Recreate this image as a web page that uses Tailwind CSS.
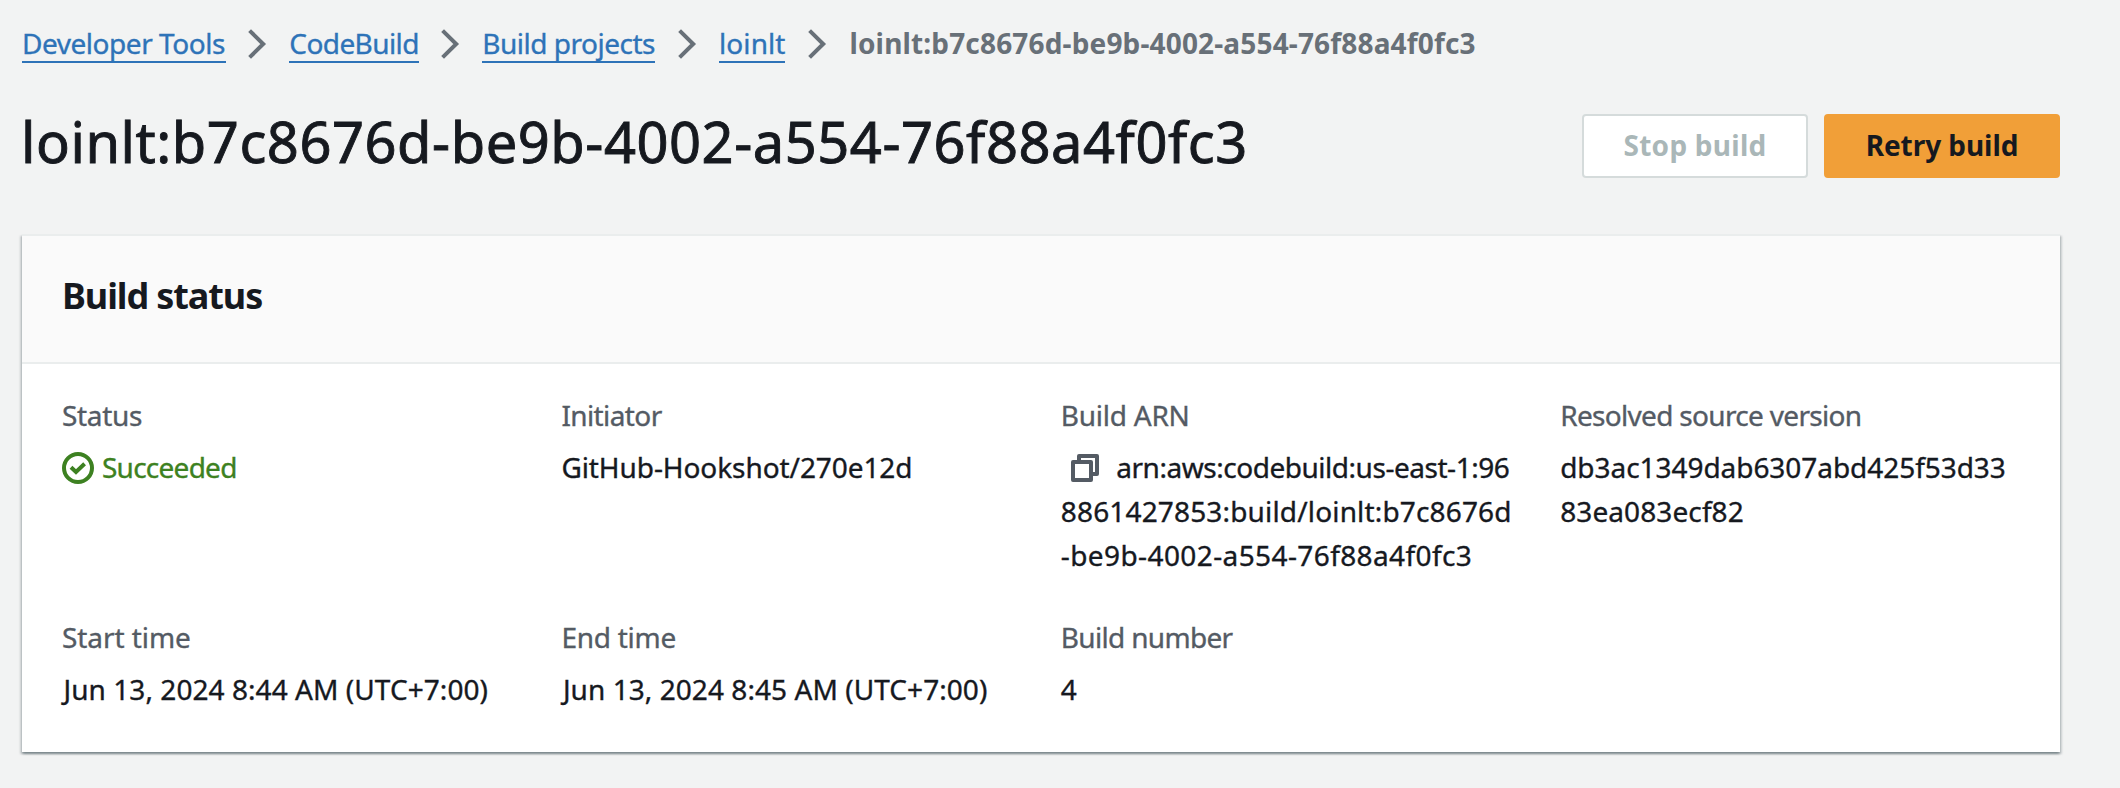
<!DOCTYPE html>
<html lang="en">
<head>
<meta charset="utf-8">
<title>Build status</title>
<script src="https://cdn.jsdelivr.net/npm/@tailwindcss/browser@4"></script>
</head>
<body class="min-h-screen overflow-hidden bg-[#f2f3f3] pl-[22px] pr-[60px] font-['Noto_Sans','Open_Sans',sans-serif] text-[28px] leading-[44px] text-[#16191f] whitespace-nowrap [-webkit-text-stroke:0.35px]">

<nav class="flex h-[63px] items-end leading-[40px] text-[#2e73b8]">
  <a class="h-10 w-[203.5px] border-b-2 border-[#2e73b8] tracking-[-0.46px]">Developer Tools</a>
  <svg class="mx-[22.4px] mb-1 h-[30px] w-[19px] shrink-0" viewBox="0 0 19 30" fill="none" stroke="#687078" stroke-width="4"><path d="M1.6 1.6 15.2 15 1.6 28.4"/></svg>
  <a class="h-10 w-[129.5px] border-b-2 border-[#2e73b8] tracking-[-0.58px]">CodeBuild</a>
  <svg class="mx-[22.2px] mb-1 h-[30px] w-[19px] shrink-0" viewBox="0 0 19 30" fill="none" stroke="#687078" stroke-width="4"><path d="M1.6 1.6 15.2 15 1.6 28.4"/></svg>
  <a class="h-10 w-[173px] border-b-2 border-[#2e73b8] tracking-[-0.48px]">Build projects</a>
  <svg class="mx-[22.4px] mb-1 h-[30px] w-[19px] shrink-0" viewBox="0 0 19 30" fill="none" stroke="#687078" stroke-width="4"><path d="M1.6 1.6 15.2 15 1.6 28.4"/></svg>
  <a class="h-10 w-[66.5px] border-b-2 border-[#2e73b8] tracking-[0.1px]">loinlt</a>
  <svg class="mx-[22.5px] mb-1 h-[30px] w-[19px] shrink-0" viewBox="0 0 19 30" fill="none" stroke="#687078" stroke-width="4"><path d="M1.6 1.6 15.2 15 1.6 28.4"/></svg>
  <span class="h-10 font-bold tracking-[0.16px] text-[#687078] [-webkit-text-stroke:0px]">loinlt:b7c8676d-be9b-4002-a554-76f88a4f0fc3</span>
</nav>

<header class="mt-11 flex h-[127px] items-start justify-between">
  <h1 class="-ml-px text-[56px] leading-[68px] tracking-[0.54px] [-webkit-text-stroke:0.9px]">loinlt:b7c8676d-be9b-4002-a554-76f88a4f0fc3</h1>
  <div class="mt-[7px] flex gap-4 font-bold leading-[59px] [-webkit-text-stroke:0px]">
    <button class="flex h-16 w-[226px] justify-center rounded border-2 border-[#d5dbdb] bg-white tracking-[0.26px] text-[#aab7b8]">Stop build</button>
    <button class="flex h-16 w-[236px] justify-center rounded border-2 border-[#f19f38] bg-[#f19f38] tracking-[-0.06px]">Retry build</button>
  </div>
</header>

<main class="h-[518px] border-t-2 border-[#eaeded] bg-white shadow-[0_2px_2px_0_rgba(0,28,36,0.3),2px_2px_2px_0_rgba(0,28,36,0.15),-2px_2px_2px_0_rgba(0,28,36,0.15)]">
  <div class="h-32 border-b-2 border-[#eaeded] bg-[#fafafa] pl-10 pt-[38px]">
    <h2 class="text-[36px] font-bold leading-[44px] tracking-[-1.1px] [-webkit-text-stroke:0px]">Build status</h2>
  </div>
  <div class="grid grid-cols-[repeat(4,499.4px)] gap-y-[38px] pl-10 pt-[29px]">
    <div>
      <div class="mb-2 tracking-[-0.32px] text-[#545b64]">Status</div>
      <div class="flex items-center gap-2 tracking-[-0.75px] text-[#3d8121]">
        <svg class="mt-0.5 h-8 w-8 shrink-0" viewBox="0 0 32 32" fill="none" stroke="currentColor" stroke-width="4"><circle cx="16" cy="16" r="14"/><path d="M9 15.2 14 20 22.6 11.8"/></svg>
        <span>Succeeded</span>
      </div>
    </div>
    <div>
      <div class="mb-2 tracking-[-0.6px] text-[#545b64]">Initiator</div>
      <div class="tracking-[-0.08px]">GitHub-Hookshot/270e12d</div>
    </div>
    <div>
      <div class="mb-2 tracking-[-0.24px] text-[#545b64]">Build ARN</div>
      <div class="flex items-center pl-[10px]">
        <svg class="mr-[17.5px] mt-0.5 h-7 w-7 shrink-0" viewBox="0 0 28 28" fill="none" stroke="#545b64" stroke-width="4" stroke-linejoin="round"><path d="M2 8h18v18H2zM8 7V2h18v18h-5"/></svg>
        <span class="tracking-[-0.47px]">arn:aws:codebuild:us-east-1:96</span>
      </div>
      <div class="tracking-[0.16px]">8861427853:build/loinlt:b7c8676d</div>
      <div class="tracking-[0.4px]">-be9b-4002-a554-76f88a4f0fc3</div>
    </div>
    <div>
      <div class="mb-2 tracking-[-0.68px] text-[#545b64]">Resolved source version</div>
      <div class="tracking-[-0.05px]">db3ac1349dab6307abd425f53d33</div>
      <div class="tracking-[0.1px]">83ea083ecf82</div>
    </div>
    <div>
      <div class="mb-2 tracking-[-0.07px] text-[#545b64]">Start time</div>
      <div class="pl-[1.5px] tracking-[0.06px]">Jun 13, 2024 8:44 AM (UTC+7:00)</div>
    </div>
    <div>
      <div class="mb-2 tracking-[-0.27px] text-[#545b64]">End time</div>
      <div class="pl-[1.5px] tracking-[0.06px]">Jun 13, 2024 8:45 AM (UTC+7:00)</div>
    </div>
    <div>
      <div class="mb-2 tracking-[-0.68px] text-[#545b64]">Build number</div>
      <div>4</div>
    </div>
  </div>
</main>
</body>
</html>
